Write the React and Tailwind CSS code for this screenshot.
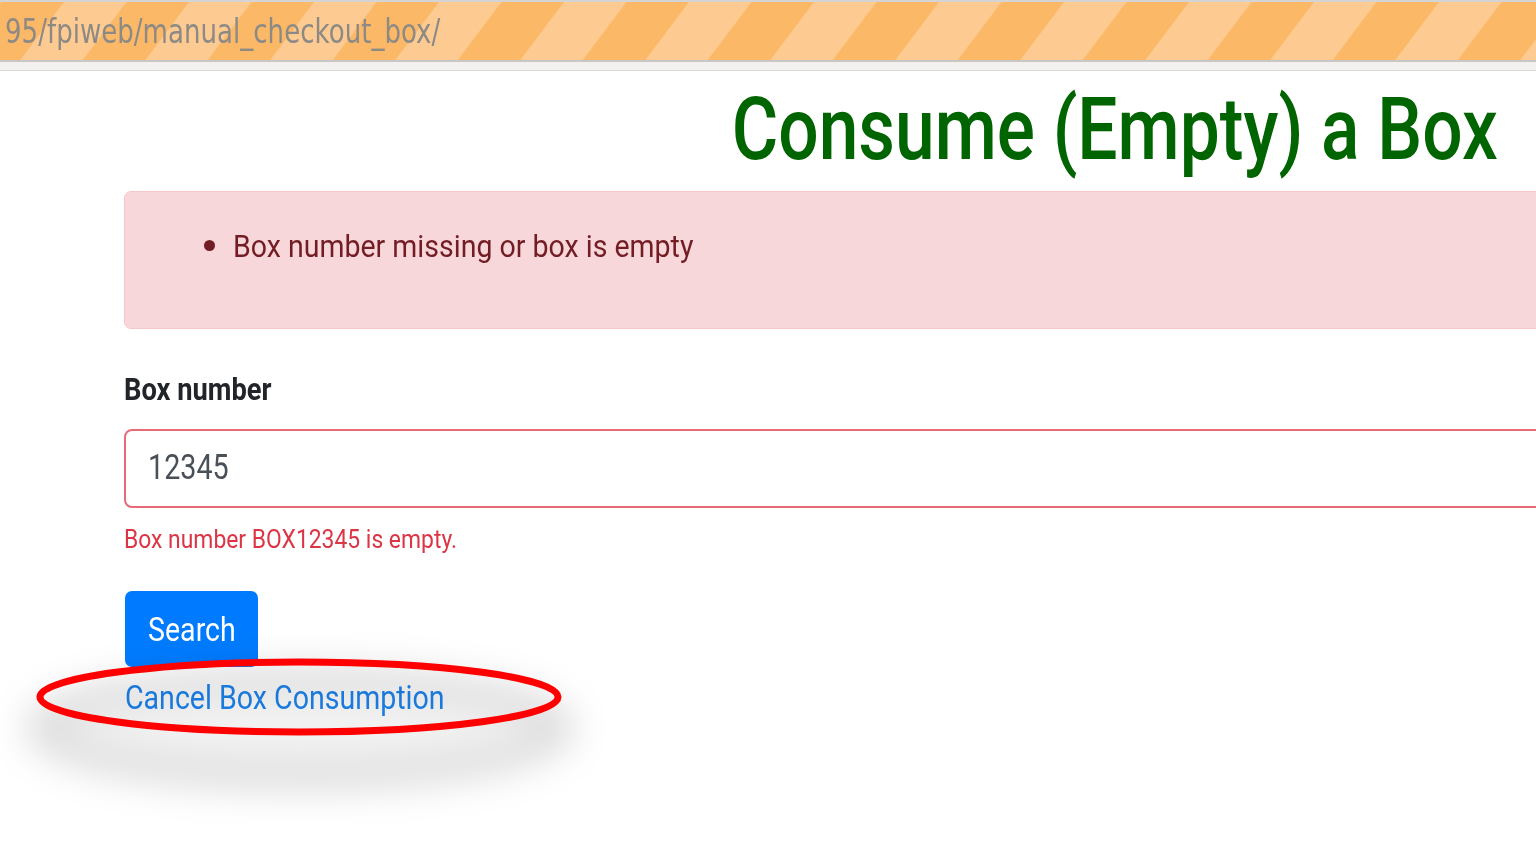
import React from "react";

function Stripes() {
  return (
    <svg className="absolute inset-0" width="1536" height="60" viewBox="0 0 1536 60">
      <defs>
        <pattern id="stripes" patternUnits="userSpaceOnUse" width="125" height="200" patternTransform="skewX(-37)">
          <rect x="0" y="0" width="125" height="200" fill="#fdcb91" />
          <rect x="1.5" y="0" width="62.5" height="200" fill="#fbb867" />
        </pattern>
      </defs>
      <rect x="0" y="0" width="1536" height="60" fill="url(#stripes)" />
    </svg>
  );
}

function Ellipse() {
  return (
    <svg
      className="absolute left-0 top-0 pointer-events-none"
      width="700"
      height="862"
      viewBox="0 0 700 862"
    >
      <defs>
        <filter id="blur" x="-50%" y="-200%" width="200%" height="500%">
          <feGaussianBlur stdDeviation="18" />
        </filter>
      </defs>
      <ellipse cx="300" cy="728" rx="262" ry="50" fill="rgba(0,0,0,0.05)" stroke="rgba(0,0,0,0.13)" strokeWidth="24" filter="url(#blur)" />
      <ellipse cx="299" cy="697" rx="259" ry="35" fill="none" stroke="#ff0000" strokeWidth="7" />
    </svg>
  );
}

export default function App() {
  return (
    <div className="relative w-[1536px] h-[862px] overflow-hidden bg-white" style={{ fontFamily: "Roboto, 'Liberation Sans', sans-serif" }}>
      {/* address bar */}
      <div className="relative h-[62px] border-t-2 border-b-2 border-t-[#d4d4d4] border-b-[#c9c6c4] overflow-hidden">
        <Stripes />
        <div className="relative flex h-full items-center pl-[5px]">
          <span
            className="inline-block origin-left scale-x-[0.79] whitespace-nowrap text-[33px] leading-none text-[#8d8a86]"
            style={{ fontFamily: "'DejaVu Sans', sans-serif" }}
          >
            95/fpiweb/manual_checkout_box/
          </span>
        </div>
      </div>
      <div className="h-[9px] bg-[#f2f1f0] border-b border-[#dedada]" />

      {/* heading */}
      <div className="flex justify-end pr-[38px] pt-[14px] h-[120px]">
        <h1 className="inline-block origin-right scale-x-[0.81] whitespace-nowrap text-[88px] font-medium leading-none text-[#006400]">
          Consume (Empty) a Box
        </h1>
      </div>

      {/* content */}
      <div className="pl-[124px] w-[1700px]">
        <div className="h-[138px] rounded-l-[7px] border border-[#f5c6cb] bg-[#f8d7da] pl-[88px] pt-[34px]">
          <ul className="list-disc text-[#721c24]">
            <li className="text-[31px] leading-[38px] ml-[20px] marker:text-[36px]">
              <span className="inline-block origin-left scale-x-[0.92] whitespace-nowrap">Box number missing or box is empty</span>
            </li>
          </ul>
        </div>

        <div className="mt-[42px]">
          <label className="block text-[31px] font-bold leading-[38px] text-[#212529]">
            <span className="inline-block origin-left scale-x-[0.88] whitespace-nowrap">Box number</span>
          </label>
          <div className="mt-[20px] flex h-[79px] items-center rounded-l-[8px] border-2 border-[#e66b77] pl-[22px]">
            <span className="inline-block origin-left scale-x-[0.82] whitespace-nowrap text-[35px] text-[#495057]">12345</span>
          </div>
          <div className="mt-[17px] h-[30px] text-[25px] leading-[30px] text-[#dc3545]">
            <span className="inline-block origin-left scale-x-[0.915] whitespace-nowrap">Box number BOX12345 is empty.</span>
          </div>
        </div>

        <button className="mt-[36px] ml-px flex h-[76px] w-[133px] items-center rounded-[7px] bg-[#007bff] pl-[23px] text-white">
          <span className="inline-block origin-left scale-x-[0.84] whitespace-nowrap text-[34px] leading-none">Search</span>
        </button>
        <div className="mt-[10px] ml-px h-[40px] leading-[40px]">
          <a className="inline-block origin-left scale-x-[0.84] whitespace-nowrap text-[34px] text-[#1b84f0]">Cancel Box Consumption</a>
        </div>
      </div>

      <Ellipse />
    </div>
  );
}
